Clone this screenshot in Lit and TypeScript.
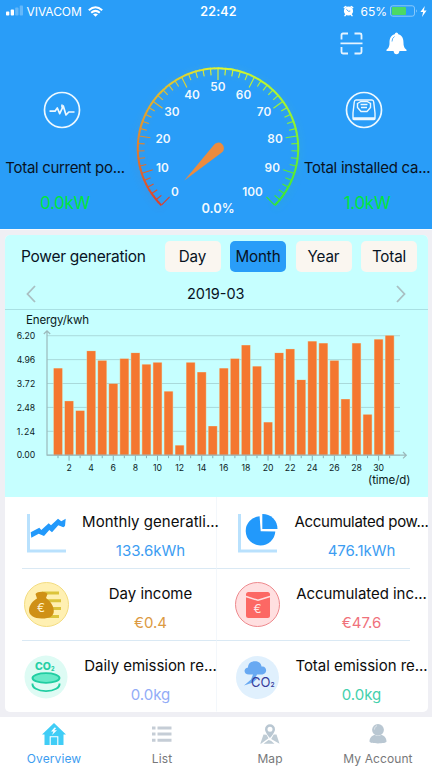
import { LitElement, html, svg, css } from "lit";
import { customElement, state } from "lit/decorators.js";
import { classMap } from "lit/directives/class-map.js";

const VALUES = [
  4.5, 2.8, 2.3, 5.4, 4.9, 3.7, 5.0, 5.3, 4.7, 4.8, 3.3, 0.5, 4.8, 4.3, 1.5, 4.5,
  5.0, 5.7, 4.6, 1.7, 5.3, 5.5, 3.9, 5.9, 5.8, 4.9, 2.9, 5.8, 2.1, 6.0, 6.2,
];

@customElement("status-bar")
class StatusBar extends LitElement {
  static styles = css`
    :host { display: flex; height: 22px; padding: 0 5px 0 6px; color: #fff; align-items: center; box-sizing: border-box; }
    .side { flex: 1; display: flex; align-items: center; }
    .right { justify-content: flex-end; }
    .carrier { font-size: 12px; letter-spacing: -0.05px; margin: 0 6px 0 3.5px; }
    .time { font-size: 12.5px; font-weight: 600; letter-spacing: 0.2px; padding-left: 4px; }
    .pct { font-size: 12px; margin: 0 3px 0 6px; letter-spacing: 0; }
    svg { display: block; flex: none; }
    .bolt { margin-left: 2px; }
  `;
  render() {
    return html`
      <div class="side">
        <svg width="17" height="12" viewBox="0 0 17 12" fill="#fff">
          <rect x="0" y="6.6" width="3.3" height="4" rx=".8" />
          <rect x="4.7" y="4.6" width="3.3" height="6" rx=".8" />
          <rect x="9.2" y="2.6" width="3.3" height="8" rx=".8" opacity=".28" />
          <rect x="13.7" y=".6" width="3.3" height="10" rx=".8" opacity=".28" />
        </svg>
        <span class="carrier">VIVACOM</span>
        <svg width="15" height="11" viewBox="0 0 15 11" fill="none" stroke="#fff" stroke-width="2">
          <path d="M.8 4.2Q7.5-1.8 14.2 4.2M3.2 6.8Q7.5 3 11.8 6.8" />
          <path d="M7.5 10.8 5 8.3Q7.5 6.5 10 8.3z" fill="#fff" stroke="none" />
        </svg>
      </div>
      <span class="time">22:42</span>
      <div class="side right">
        <svg width="11" height="12" viewBox="0 0 11 12">
          <circle cx="5.5" cy="6" r="4.6" fill="#fff" />
          <path d="M1.3 2.6 2.8 1.5M9.7 2.6 8.2 1.5M2.6 9.8 2 10.7M8.4 9.8 9 10.7" stroke="#fff" stroke-width="1.5" stroke-linecap="round" />
          <path d="M3.4 4.3 5.5 6.3 7.3 6" stroke="#299df8" stroke-width=".9" fill="none" />
        </svg>
        <span class="pct">65%</span>
        <svg width="28" height="12" viewBox="0 0 28 12">
          <rect x=".5" y=".8" width="24" height="10.4" rx="2.3" fill="none" stroke="#8bcafb" />
          <rect x="1.8" y="2" width="14.2" height="8" rx="1" fill="#4cd964" />
          <path d="M26 4.2q1.5 1.8 0 3.6z" fill="#a8d8fc" />
        </svg>
        <svg class="bolt" width="7" height="11" viewBox="0 0 7 11"><path d="M4.8 0 .4 6h2.7L2 11l4.6-6.4H3.9z" fill="#fff" /></svg>
      </div>
    `;
  }
}

@customElement("power-gauge")
class PowerGauge extends LitElement {
  static styles = css`
    :host { display: block; width: 176px; height: 165px; }
    svg { display: block; overflow: visible; }
    text { fill: #fff; text-anchor: middle; font-weight: 600; font-size: 11.8px; letter-spacing: 0.05px; fill-opacity: 0.95; }
    .reading { font-size: 12.8px; letter-spacing: 0; }
  `;
  private color(t: number) {
    const stops = [[222, 62, 42], [228, 160, 44], [222, 246, 50], [150, 244, 46], [50, 232, 50]];
    const p = Math.min(3.9999, t * 4);
    const i = Math.floor(p);
    const c = stops[i].map((v, k) => Math.round(v + (stops[i + 1][k] - v) * (p - i)));
    return `rgb(${c.join(",")})`;
  }
  private pt(t: number, r: number) {
    const a = ((t * 270 - 225) * Math.PI) / 180;
    return [88 + r * Math.cos(a), 88.5 + r * Math.sin(a)];
  }
  render() {
    const segs = Array.from({ length: 100 }, (_, i) => {
      const [x1, y1] = this.pt(i / 100, 80.2);
      const [x2, y2] = this.pt(Math.min(1, (i + 1.15) / 100), 80.2);
      return svg`<path d="M${x1} ${y1}A80.2 80.2 0 0 1 ${x2} ${y2}" stroke=${this.color(i / 100)} stroke-width="2" fill="none" />`;
    });
    const ticks = Array.from({ length: 51 }, (_, i) => {
      const [x1, y1] = this.pt(i / 50, 80);
      const [x2, y2] = this.pt(i / 50, i % 5 ? 73.5 : 68.5);
      return svg`<line x1=${x1} y1=${y1} x2=${x2} y2=${y2} stroke=${this.color(i / 50)} stroke-width="1.1" />`;
    });
    const labels: [number, number, number][] = [
      [0, 45, 132], [10, 32.5, 107.5], [20, 33, 78.3], [30, 42, 51.5], [40, 62, 34.5], [50, 88, 26.5],
      [60, 113.5, 34.5], [70, 134, 51.5], [80, 145, 78.3], [90, 142.3, 107.5], [100, 122.5, 132],
    ];
    return html`<svg width="176" height="165" viewBox="0 0 176 165">
      <defs><filter id="glow" x="-20%" y="-20%" width="140%" height="140%"><feGaussianBlur stdDeviation="4" /></filter></defs>
      <g opacity=".22" filter="url(#glow)" transform="translate(0 2)">${segs}</g>
      ${ticks}${segs}
      ${labels.map(([n, x, y]) => svg`<text x=${x} y=${y + 4.2}>${n}</text>`)}
      <path d="M54.3 120.5 83.6 85.2A5.6 5.6 0 1 1 91.8 92.6Z" fill="#ec8b3e" />
      <text class="reading" x="88" y="153.2">0.0%</text>
    </svg>`;
  }
}

@customElement("energy-chart")
class EnergyChart extends LitElement {
  static styles = css`
    :host { display: block; height: 187px; }
    svg { display: block; }
    text { fill: #0c2426; font-size: 8.7px; }
    .unit { font-size: 11.5px; fill: #0a1a1c; }
    .end { text-anchor: end; }
    .mid { text-anchor: middle; }
  `;
  render() {
    const base = 145.2;
    const k = 19.27;
    const px = (i: number) => 53 + i * 11.055;
    return html`<svg width="422" height="187" viewBox="0 0 422 187">
      <text class="unit" x="21" y="13.7" textLength="63">Energy/kwh</text>
      ${["0.00", "1.24", "2.48", "3.72", "4.96", "6.20"].map((t, i) => {
        const y = base - i * 1.24 * k;
        return svg`<line x1="42" x2="395" y1=${y} y2=${y} stroke="#a6d5d6" stroke-width=".9" />
          <text x="11.8" y=${y + 3.2} textLength="18.4">${t}</text>`;
      })}
      ${VALUES.map((v, i) => svg`
        <rect x=${px(i) - 4.6} y=${base - v * k - 0.3} width="9.2" height=${v * k + 0.3} fill="#e6c494" />
        <rect x=${px(i) - 4.1} y=${base - v * k} width="8.2" height=${v * k} fill="#f47730" />
        <line x1=${px(i)} x2=${px(i)} y1=${base} y2=${base + (i % 2 ? 5.5 : 3)} stroke="#87adb0" />
        ${i % 2 ? svg`<text class="mid" x=${px(i)} y="161.2">${i + 1}</text>` : ""}`)}
      <path d="M42 ${base}V21M38.8 24 42 20.8 45.2 24M41.5 ${base}H401M398 142 401.3 ${base} 398 148.4" fill="none" stroke="#9cb9bb" stroke-width="1.2" />
      <text class="unit end" x="405.5" y="173.7" textLength="42.5">(time/d)</text>
    </svg>`;
  }
}

const statIcons = [
  svg`<path d="M5.5 4v37.3M4 41H43" stroke="#b9e1fd" stroke-width="3" fill="none"/>
    <path d="M7.7 22.3 16.3 17.7 18.3 20 25.7 13.3 28 15.3 35 8.7 38.3 11.3 42.7 8.7 42 16 40.3 17.3 35.3 15.3 29 22.3 26.3 20 21 26 15.7 23.7 8.3 27.7z" fill="#2299fb"/>`,
  svg`<path d="M5.5 4v37.3M4 41H43" stroke="#b9e1fd" stroke-width="3" fill="none"/>
    <path d="M25.6 6.3A14.8 14.6 0 1 0 41.3 21.6L26.7 21.3z" fill="#2299fb"/><path d="M28.3 4A14.7 14.7 0 0 1 43.5 19H28.3z" fill="#2299fb"/>`,
  svg`<circle cx="23.5" cy="22.5" r="22" fill="#fff0b2" stroke="#f3dc80"/>
    <path d="M19 11h17M24 18.8h14M25 26.6h13M21 34.5h15" stroke="#dcc43c" stroke-width="3"/>
    <path d="M12.5 12c2-3 10-3 12 0l-1.5 4c5 4 7.8 8 7.8 13 0 5-4 7.5-12 7.5S6 33 6 28.5c0-5 3.5-9.5 8-12z" fill="#cf9016"/>
    <text x="18" y="29.5" text-anchor="middle" font-size="12" fill="#fff3cc">€</text>`,
  svg`<circle cx="23.5" cy="22.5" r="22" fill="#ffdfe0" stroke="#ed888c" stroke-width="1"/>
    <rect x="12" y="10" width="24" height="26" rx="2.5" fill="#fc6864"/>
    <path d="M12 14.5 24 18.3 36 14.5" stroke="#ffdfe0" stroke-width="1.5" fill="none"/>
    <text x="23.5" y="31" text-anchor="middle" font-size="12" fill="#ffe6e6">€</text>`,
  svg`<circle cx="23" cy="23" r="21.5" fill="#defbf4"/>
    <text x="12" y="16" font-size="10.5" font-weight="800" fill="#25cfa5">CO<tspan font-size="5.5" dy="1">2</tspan></text>
    <ellipse cx="23" cy="24" rx="13.5" ry="4.9" fill="#68eac8" stroke="#20cda2" stroke-width="1.9"/>
    <path d="M9.5 29.5c-.5 4 5 7.6 13.5 7.6s14-3.6 13.5-7.6" fill="none" stroke="#20cda2" stroke-width="1.9"/>`,
  svg`<circle cx="23.5" cy="23.5" r="21.5" fill="#e0f0fd"/>
    <path d="M15 20.5c-5.5 0-6-6-1-7 0-8 13-8 13.5-1 5.5-1 6.5 7 1 8h-5.500l-2 4 3-.5-5 4.500-9 3 7-6 2-5z" fill="#68a9f2"/>
    <text x="17" y="32.8" font-size="13" fill="#373d9c" textLength="19.5">CO</text><text x="36.5" y="33" font-size="6.5" font-weight="600" fill="#373d9c">2</text>`,
];

@customElement("stat-cell")
class StatCell extends LitElement {
  static properties = { label: {}, value: {}, icon: { type: Number }, spacing: { type: Number }, tint: {} };
  declare label: string;
  declare value: string;
  declare icon: number;
  declare spacing: number;
  declare tint: string;
  static styles = css`
    :host { display: flex; height: 100%; min-width: 0; }
    svg { display: block; flex: none; margin: 13px 6px 0 1px; overflow: visible; }
    .copy { flex: 1; min-width: 0; display: flex; flex-direction: column; align-items: center; padding: 15px 0 0 8px; margin-right: -1px; white-space: nowrap; }
    .label { font-size: 15px; line-height: 20px; color: #0c0c0c; }
    .value { font-size: 15px; line-height: 20px; margin-top: 9px; letter-spacing: 0; }
    .blue { color: #3c9df2; } .gold { color: #dc9a42; } .red { color: #f0717b; }
    .lilac { color: #92acf7; } .green { color: #43d0ac; }
  `;
  render() {
    return html`<svg width="47" height="46" viewBox="0 0 47 46">${statIcons[this.icon]}</svg>
      <div class="copy">
        <span class="label" style="letter-spacing:${this.spacing}px">${this.label}</span>
        <span class="value ${this.tint}">${this.value}</span>
      </div>`;
  }
}

const STATS = [
  { label: "Monthly generatli...", value: "133.6kWh", tint: "blue", spacing: 0.03 },
  { label: "Accumulated pow...", value: "476.1kWh", tint: "blue", spacing: -0.3 },
  { label: "Day income", value: "€0.4", tint: "gold", spacing: -0.02 },
  { label: "Accumulated inc...", value: "€47.6", tint: "red", spacing: -0.04 },
  { label: "Daily emission re...", value: "0.0kg", tint: "lilac", spacing: -0.05 },
  { label: "Total emission re...", value: "0.0kg", tint: "green", spacing: -0.04 },
];

const navIcons = [
  svg`<path d="M12 0 24 11.5h-2.5V22h-19V11.5H0z" fill="#40cdf6"/>
    <path d="M8.2 22v-8.2h7.6V22" fill="none" stroke="#fff" stroke-width="1.1"/><path d="m12.5 4.5-3.5 4h2.5L10 12l5-4.8h-2.8l2-2.2z" fill="#fff"/>`,
  svg`<path d="M2 5h3.5M7.5 5h14M2 11h3.5M7.5 11h14M2 17.3h3.5M7.5 17.3h14" stroke="#c5cdd6" stroke-width="3"/>`,
  svg`<path d="M12 1.2a5 5 0 0 0-5 5c0 3.5 5 8.8 5 8.8s5-5.3 5-8.8a5 5 0 0 0-5-5zm0 2.6a2.5 2.5 0 1 1 0 5 2.5 2.5 0 0 1 0-5z" fill="#b9c7d2" fill-rule="evenodd"/>
    <path d="m5.5 11.5 3 .3 2 3.5-7.5 5.500H2.300zM18.500 11.500h-2.800l-2.500 4.500 8.300 4.800zM10.500 17l2.500.7 3.500 3.100h-11z" fill="#bfccd5"/>`,
  svg`<circle cx="12" cy="6.8" r="5.9" fill="#b9c7d2"/><path d="M3.5 18.5c0-4 3-6.500 5.500-6.500q3 2 6 0c2.500 0 5.500 2.500 5.500 6.500 0 2.500-17 2.500-17 0z" fill="#b9c7d2"/>
    <path d="M8.500 6.500c0-2 1-3.300 2.500-3.800" stroke="#e0e7ec" fill="none"/>`,
];

@customElement("app-root")
class AppRoot extends LitElement {
  @state() private range = "Month";
  @state() private tab = "Overview";

  static styles = css`
    :host { display: flex; flex-direction: column; width: 432px; height: 768px; overflow: hidden; background: #efeff4; font-family: Inter, "Liberation Sans", sans-serif; color: #08131f; }
    svg { display: block; }
    .header { background: #299df8; border-bottom: 1px solid #f8fafc; box-sizing: border-box; height: 230px; flex: none; display: flex; flex-direction: column; }
    .tools { height: 38px; display: flex; justify-content: flex-end; gap: 23px; padding: 10px 25px 0 0; box-sizing: border-box; flex: none; }
    .hero { display: grid; grid-template-columns: 130px 176px 122px; height: 168px; }
    .metric { display: flex; flex-direction: column; align-items: center; padding-top: 30.5px; white-space: nowrap; }
    .metric.l svg { margin-left: -7px; } .metric.r svg { margin-left: -6px; }
    .name { font-size: 15px; line-height: 20px; margin-top: 29px; }
    .cur { letter-spacing: -0.32px; }
    .cap { letter-spacing: -0.26px; }
    .num { font-size: 17px; line-height: 22px; margin-top: 14px; color: #00e63c; letter-spacing: -0.3px; }
    .card { margin: 5px 4.5px 0 5px; height: 477px; border-radius: 5px; overflow: hidden; background: #fff; flex: none; }
    .chart { background: #c6ffff; height: 262px; }
    .bar { display: flex; height: 43px; align-items: center; padding: 0 10.5px 0 16px; box-sizing: border-box; }
    .title { flex: 1; font-size: 15.5px; letter-spacing: -0.28px; }
    .seg { display: flex; gap: 9.5px; }
    .opt { width: 56px; height: 31px; border: 0; padding: 0; border-radius: 5px; background: #faf6f0; font: 400 15.2px/31px Inter, sans-serif; letter-spacing: -0.15px; color: #08131f; text-align: center; }
    .opt.on { background: #299df8; }
    .period { display: flex; justify-content: space-between; align-items: center; height: 32px; padding: 0 22px 0 21px; border-bottom: 1px solid #a9e0e3; font-size: 14.5px; box-sizing: border-box; }
    .stats { display: grid; grid-template-columns: 212px 211px; grid-template-rows: 72px 72px 71px; }
    .cell { box-sizing: border-box; border-bottom: 1px solid transparent; }
    .cell.a { margin-left: 17px; border-right: 1px solid #f3f7fb; }
    .cell.b { padding: 0 1px 0 16px; }
    .cell.a.line { border-bottom-color: #dae9f4; }
    .cell.b.line { background: linear-gradient(#dae9f4, #dae9f4) 0 100% / 193px 1px no-repeat border-box; }
    .nav { margin-top: auto; height: 51px; background: #fff; display: grid; grid-template-columns: repeat(4, 1fr); }
    .item { display: flex; flex-direction: column; align-items: center; padding-top: 6px; font-size: 12px; letter-spacing: 0.1px; color: #77787a; }
    .item span { margin-top: 5px; line-height: 15px; }
    .item.on { color: #3d9df0; }
  `;

  render() {
    return html`
      <header class="header">
        <status-bar></status-bar>
        <div class="tools">
          <svg width="23" height="23" viewBox="0 0 23 23" fill="none" stroke="#e5f4ff" stroke-width="1.8">
            <path d="M1.5 7.5V3q0-1.5 1.5-1.5h5M14.5 1.5h5.5q1.5 0 1.5 1.5v4.5M1.5 15v5q0 1.5 1.5 1.5h5M14.5 21.5h5.5q1.5 0 1.5-1.5v-5M.5 11.3h22" />
          </svg>
          <svg width="21" height="23" viewBox="0 0 21 23">
            <path d="M10.5.5q1.5 0 1.8 1.8C16.5 3.500 17.500 7 17.500 11c0 4 1.500 5.500 3 6.800V19H.5v-1.200C2 16.500 3.500 15 3.500 11c0-4 1-7.500 5.200-8.700Q9 .5 10.500.5zM7.500 18.800h6q-.5 3.500-3 3.500t-3-3.500z" fill="#fff" />
            <path d="M6 9.500Q6 6 8.500 4.500" stroke="#299df8" fill="none" stroke-width=".8" />
          </svg>
        </div>
        <div class="hero">
          <div class="metric l">
            <svg width="38" height="38" viewBox="0 0 38 38" fill="none" stroke="#ecf8ff" stroke-width="1.7">
              <circle cx="19" cy="19" r="17.5" />
              <path d="M6.5 20.2h5.5l2.3-3.2 2.4 5.7L20.3 15l2.700 9 2.800-3h5.700" stroke-linejoin="round" /><path d="M19 13.5v3" />
            </svg>
            <div class="name cur">Total current po...</div>
            <div class="num">0.0kW</div>
          </div>
          <power-gauge></power-gauge>
          <div class="metric r">
            <svg width="38" height="38" viewBox="0 0 38 38" fill="none" stroke="#ecf8ff" stroke-width="1.4">
              <circle cx="19" cy="19" r="17.5" stroke-width="1.7" />
              <path d="M11 9h16q1.500 0 1.700 2l1.300 11v5.500q0 1-1 1H9q-1 0-1-1V22L9.300 11Q9.500 9 11 9zM8.500 27h21" />
              <path d="M12.500 12.500 16 10.500h6l3.500 2v4L22 20.500h-6l-3.500-4zM15.500 13.500h7M16 16.500h6" />
            </svg>
            <div class="name cap">Total installed ca...</div>
            <div class="num">1.0kW</div>
          </div>
        </div>
      </header>

      <main class="card">
        <section class="chart">
          <div class="bar">
            <span class="title">Power generation</span>
            <div class="seg">
              ${["Day", "Month", "Year", "Total"].map((r) => html`<button class=${classMap({ opt: true, on: r === this.range })} @click=${() => (this.range = r)}>${r}</button>`)}
            </div>
          </div>
          <div class="period">
            <svg width="10" height="18" viewBox="0 0 10 18"><path d="M9 1 1.5 9 9 17" fill="none" stroke="#a9bfc2" stroke-width="1.8" /></svg>
            <span>2019-03</span>
            <svg width="10" height="18" viewBox="0 0 10 18"><path d="m1 1 7.5 8L1 17" fill="none" stroke="#a9bfc2" stroke-width="1.8" /></svg>
          </div>
          <energy-chart></energy-chart>
        </section>
        <section class="stats">
          ${STATS.map((s, i) => html`<div class=${classMap({ cell: true, a: i % 2 === 0, b: i % 2 === 1, line: i < 4 })}>
            <stat-cell .label=${s.label} .value=${s.value} .icon=${i} .tint=${s.tint} .spacing=${s.spacing}></stat-cell>
          </div>`)}
        </section>
      </main>

      <nav class="nav">
        ${["Overview", "List", "Map", "My Account"].map((t, i) => html`<div class=${classMap({ item: true, on: t === this.tab })} @click=${() => (this.tab = t)}>
          <svg width="24" height="23" viewBox="0 0 24 23">${navIcons[i]}</svg><span>${t}</span>
        </div>`)}
      </nav>
    `;
  }
}
